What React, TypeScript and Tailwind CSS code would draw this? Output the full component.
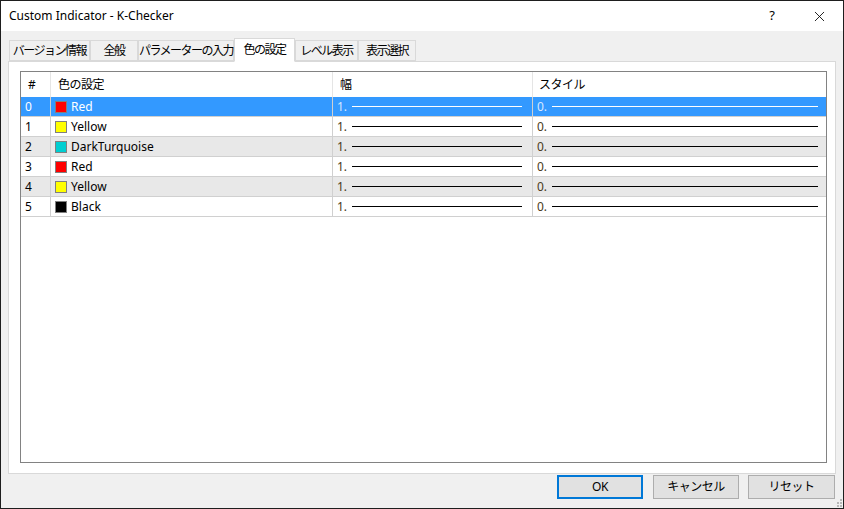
import { X } from "lucide-react";

const rows = [
  { n: 0, name: "Red", color: "#ff0000" },
  { n: 1, name: "Yellow", color: "#ffff00" },
  { n: 2, name: "DarkTurquoise", color: "#00ced1" },
  { n: 3, name: "Red", color: "#ff0000" },
  { n: 4, name: "Yellow", color: "#ffff00" },
  { n: 5, name: "Black", color: "#000000" },
];

const tabs = ["バージョン情報", "全般", "パラメーターの入力", "色の設定", "レベル表示", "表示選択"];
const tabWidths = ["w-[81px]", "w-[48px]", "w-[96px]", "w-[61px]", "w-[63px]", "w-[58px]"];

export default function App() {
  return (
    <div
      className="w-[844px] h-[509px] bg-[#1e1e1e] p-px overflow-hidden text-[12px] text-black"
      style={{ fontFamily: '"Noto Sans", "Noto Sans CJK JP", sans-serif' }}
    >
      <div className="h-full flex flex-col bg-[#f0f0f0]">
        {/* Title bar */}
        <div className="h-[30px] bg-white flex items-center shrink-0">
          <span className="ml-[8px] text-[12px]">Custom Indicator - K-Checker</span>
          <div className="flex-1" />
          <span className="w-[46px] text-center text-[13px] mr-[2px]">?</span>
          <span className="w-[44px] flex justify-center mr-[2px]">
            <X size={17} strokeWidth={1.2} />
          </span>
        </div>

        {/* Tabs */}
        <div className="h-[30px] flex items-end pl-[8px] shrink-0 text-[12px] tracking-[-1.5px]">
          {tabs.map((t, i) => {
            const active = i === 3;
            return (
              <div
                key={t}
                className={
                  active
                    ? `${tabWidths[i]} h-[24px] -mb-px z-10 bg-white border border-[#d9d9d9] border-b-white flex items-center justify-center`
                    : `${tabWidths[i]} h-[21px] bg-[#f0f0f0] border border-[#d9d9d9] flex items-center justify-center`
                }
              >
                <span className="whitespace-nowrap leading-none">{t}</span>
              </div>
            );
          })}
        </div>

        {/* Tab panel */}
        <div className="mx-[7px] h-[413px] bg-white border border-[#d9d9d9] pt-[9px] pl-[11px] pr-[8px] pb-[10px] shrink-0">
          <div className="h-full border border-[#828282] bg-white flex flex-col">
            <div className="grid grid-cols-[29px_282px_200px_1fr] h-[25px] shrink-0 tracking-[-0.5px]">
              <div className="pl-[7px] flex items-center">#</div>
              <div className="pl-[7px] flex items-center border-l border-[#e5e5e5]">色の設定</div>
              <div className="pl-[7px] flex items-center border-l border-[#e5e5e5]">幅</div>
              <div className="pl-[6px] flex items-center border-l border-[#e5e5e5]">スタイル</div>
            </div>
            {rows.map((r) => {
              const sel = r.n === 0;
              const bg = sel ? "bg-[#3399ff] text-white" : r.n % 2 === 0 ? "bg-[#e8e8e8]" : "bg-white";
              const line = sel ? "bg-white" : "bg-black";
              const num = sel ? "text-[#d8e8ff]" : "text-[#4a3a20]";
              return (
                <div
                  key={r.n}
                  className={`grid grid-cols-[29px_282px_200px_1fr] h-[20px] border-b border-[#d0d0d0] ${bg}`}
                >
                  <div className="pl-[4px] flex items-center">{r.n}</div>
                  <div className="flex items-center border-l border-[#d0d0d0] pl-[4px]">
                    <span
                      className="w-[12px] h-[12px] border border-[#808080] mr-[4px]"
                      style={{ backgroundColor: r.color }}
                    />
                    <span>{r.name}</span>
                  </div>
                  <div className="flex items-center border-l border-[#d0d0d0] pl-[4px] pr-[10px]">
                    <span className={`${num} mr-[5px]`}>1.</span>
                    <span className={`flex-1 h-[1.5px] ${line}`} />
                  </div>
                  <div className="flex items-center border-l border-[#d0d0d0] pl-[4px] pr-[8px]">
                    <span className={`${num} mr-[5px]`}>0.</span>
                    <span className={`flex-1 h-[1.5px] ${line}`} />
                  </div>
                </div>
              );
            })}
          </div>
        </div>

        {/* Buttons */}
        <div className="flex justify-end pr-[8px] pt-[1px] relative flex-1 tracking-[-0.5px]">
          <button className="w-[86px] h-[24px] bg-[#e1e1e1] border-2 border-[#0078d7]">OK</button>
          <button className="w-[86px] h-[24px] ml-[10px] bg-[#e1e1e1] border border-[#adadad]">キャンセル</button>
          <button className="w-[87px] h-[24px] ml-[9px] bg-[#e1e1e1] border border-[#adadad]">リセット</button>
          <div className="absolute right-[1px] bottom-[1px] grid grid-cols-3 gap-[1px]">
            {[0, 1, 2, 3, 4, 5, 6, 7, 8].map((i) => (
              <span
                key={i}
                className={`w-[2px] h-[2px] ${i === 2 || i === 4 || i === 5 || i >= 7 ? "bg-[#b8b8b8]" : "bg-transparent"}`}
              />
            ))}
          </div>
        </div>
      </div>
    </div>
  );
}
